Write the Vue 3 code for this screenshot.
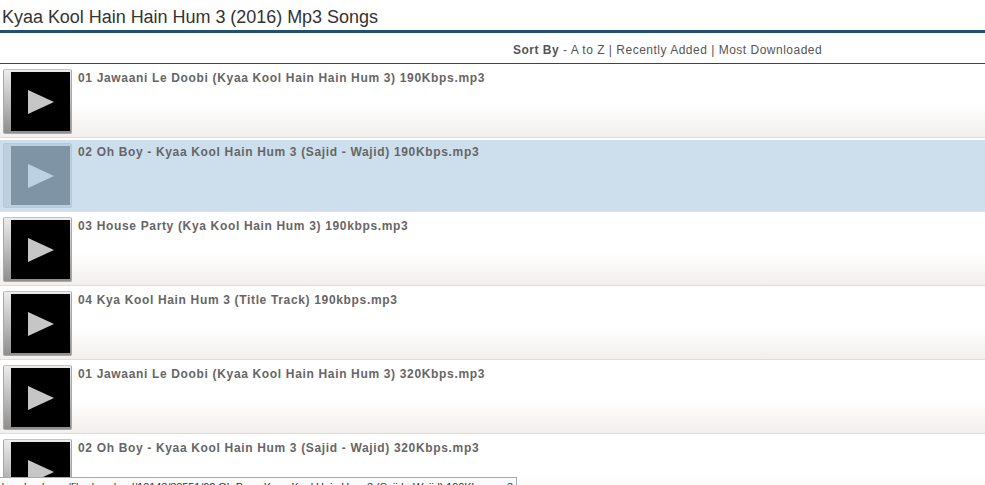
<script setup>
const songs = [
  '01 Jawaani Le Doobi (Kyaa Kool Hain Hain Hum 3) 190Kbps.mp3',
  '02 Oh Boy - Kyaa Kool Hain Hum 3 (Sajid - Wajid) 190Kbps.mp3',
  '03 House Party (Kya Kool Hain Hum 3) 190kbps.mp3',
  '04 Kya Kool Hain Hum 3 (Title Track) 190kbps.mp3',
  '01 Jawaani Le Doobi (Kyaa Kool Hain Hain Hum 3) 320Kbps.mp3',
  '02 Oh Boy - Kyaa Kool Hain Hum 3 (Sajid - Wajid) 320Kbps.mp3'
]
</script>

<template>
  <div class="page">
    <h1 class="title">Kyaa Kool Hain Hain Hum 3 (2016) Mp3 Songs</h1>
    <div class="sort">
      <b>Sort By</b> - A to Z | Recently Added | Most Downloaded
    </div>
    <ul class="list">
      <li v-for="(s, i) in songs" :key="i" class="row" :class="{ active: i === 1 }">
        <span class="thumb">
          <span class="screen">
            <svg width="26" height="24" viewBox="0 0 26 24"><path d="M0 0L26 12L0 24Z" fill="#c6c6c6" /></svg>
          </span>
        </span>
        <span class="name">{{ s }}</span>
      </li>
    </ul>
    <div class="status"><span>www.download.com/file-download/10143/38551/02 Oh Boy - Kyaa Kool Hain Hum 3 (Sajid - Wajid) 190Kbps.mp3</span></div>
  </div>
</template>

<style>
html, body { margin: 0; background: #fff; overflow: hidden; }
</style>

<style scoped>
.page {
  position: relative;
  width: 985px;
  height: 485px;
  overflow: hidden;
  font-family: "Liberation Sans", Arial, sans-serif;
  background: #fff;
}
.title {
  margin: 0;
  height: 30px;
  box-sizing: border-box;
  padding: 8px 0 0 2px;
  font-size: 18px;
  line-height: 18px;
  font-weight: 400;
  letter-spacing: -0.03px;
  color: #333;
}
.sort {
  height: 34px;
  box-sizing: border-box;
  border-top: 3px solid #22506f;
  border-bottom: 1px solid #2d4a5c;
  padding: 9px 0 0 513px;
  font-size: 12px;
  line-height: 16px;
  letter-spacing: 0.5px;
  color: #555;
}
.list {
  list-style: none;
  margin: 0;
  padding: 2px 0 0;
}
.row {
  display: flex;
  height: 72px;
  box-sizing: border-box;
  padding: 3px 0 0 3px;
  gap: 6px;
  margin-bottom: 2px;
  border-bottom: 1px solid #dcdcdc;
  background: linear-gradient(#fff 0, #fff 55%, #f2efed 100%);
}
.row.active { background: #cddfec; border-bottom-color: #dce6ee; }
.thumb {
  flex: none;
  width: 69px;
  height: 65px;
  box-sizing: border-box;
  padding: 2px 1px 2px 7px;
  border-radius: 2px;
  background: linear-gradient(#ececec, #8e8e8e);
  border: 1px solid #a8a8a8;
  border-top-color: #c4c4c4;
}
.screen {
  display: flex;
  align-items: center;
  justify-content: center;
  height: 100%;
  background: #000;
}
.active .thumb { background: #bcd0df; border-color: #b4cadb; }
.active .screen { background: #7f95a6; }
.active .screen path { fill: #bcd1e1; }
.name {
  font-size: 12px;
  line-height: 16px;
  font-weight: 700;
  letter-spacing: 0.66px;
  color: #666;
  margin-top: 1px;
}
.status {
  position: absolute;
  left: 0;
  top: 477px;
  width: 517px;
  height: 15px;
  box-sizing: border-box;
  overflow: hidden;
  display: flex;
  justify-content: flex-end;
  white-space: nowrap;
  background: #fbfbfb;
  border-top: 1px solid #aaa;
  border-right: 1px solid #aaa;
  font-size: 11px;
  line-height: 14px;
  padding: 2px 3px 0 0;
  letter-spacing: -0.1px;
  color: #333;
}
.status span { flex: none; }
</style>
